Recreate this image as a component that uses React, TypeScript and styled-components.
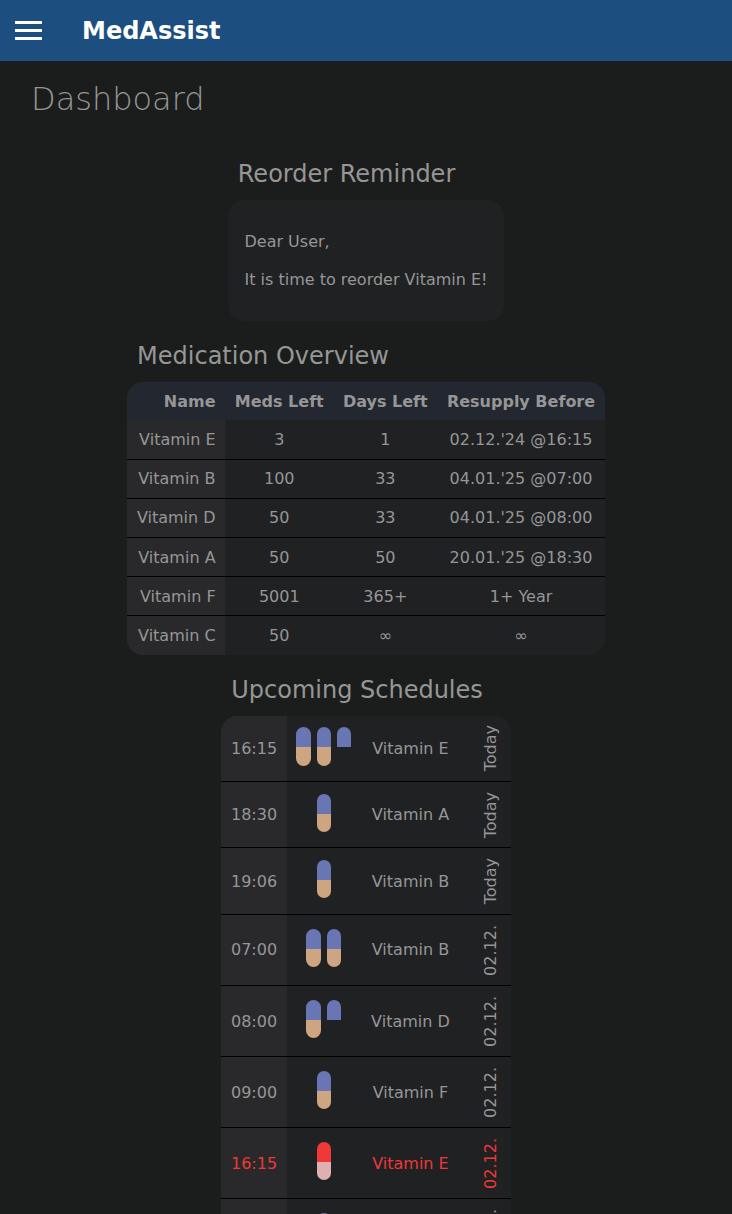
import React from "react";
import styled, { createGlobalStyle } from "styled-components";

const GlobalStyle = createGlobalStyle`
  * { box-sizing: border-box; }
  html, body { height: 100%; }
  body {
    margin: 0;
    overflow: hidden;
    background: #1b1d1c;
    color: #969696;
    font-family: "DejaVu Sans", sans-serif;
    font-size: 16px;
  }
`;

const TopBar = styled.header`
  display: flex;
  align-items: center;
  height: 61px;
  padding: 0 15px;
  gap: 40px;
  background: #1c4e80;
  color: #fff;
`;

const MenuButton = styled.button`
  display: flex;
  flex-direction: column;
  gap: 5px;
  width: 27px;
  padding: 0;
  border: 0;
  background: none;
`;

const MenuLine = styled.span`
  height: 3px;
  background: #fff;
`;

const Brand = styled.div`
  font-size: 24px;
  font-weight: 700;
  line-height: 28px;
`;

const PageTitle = styled.h1`
  margin: 19px 0 0 31px;
  font-size: 32px;
  font-weight: 200;
  line-height: 38px;
`;

const Content = styled.main`
  display: flex;
  flex-direction: column;
  align-items: center;
  gap: 21px;
  padding-top: 42px;
`;

const SectionTitle = styled.h2`
  margin: 0 0 12px 9.8px;
  font-size: 24px;
  font-weight: 400;
  line-height: 28px;
`;

const Card = styled.div`
  height: 121.2px;
  padding: 32px 16.5px;
  border-radius: 16px;
  background: #202123;
`;

const Paragraph = styled.p`
  margin: 0 0 19px;
  line-height: 19px;
`;

const TableFrame = styled.div`
  overflow: hidden;
  border-radius: 16px;
  background: #202123;
`;

const Table = styled.table`
  border-collapse: collapse;
  text-align: center;
`;

const HeadCell = styled.th<{ $right?: boolean }>`
  padding: 9.6px;
  background: #23272f;
  text-align: ${(p) => (p.$right ? "right" : "center")};
`;

const Row = styled.tr<{ $alert?: boolean }>`
  color: ${(p) => (p.$alert ? "#ee3838" : "inherit")};
  & + & { border-top: 1px solid #000; }
`;

const Cell = styled.td`
  padding: 9.6px;
`;

const LeadCell = styled(Cell)`
  background: #29292b;
  text-align: right;
`;

const DateCell = styled(Cell)`
  padding-left: 21.8px;
  padding-right: 10.4px;
`;

const VerticalText = styled.div`
  writing-mode: sideways-lr;
`;

const PillCell = styled.td`
  width: 74.8px;
  padding: 0 0.6px 3.8px 0;
`;

const Pills = styled.div`
  display: flex;
  justify-content: center;
  gap: 6px;
`;

const Pill = styled.div`
  width: 14.4px;
  height: 38.4px;
`;

const PillTop = styled.div<{ $alert?: boolean }>`
  height: 20px;
  border-radius: 8px 8px 0 0;
  background: ${(p) => (p.$alert ? "#f03838" : "#6876b4")};
`;

const PillBottom = styled.div<{ $alert?: boolean }>`
  height: 18.4px;
  border-radius: 0 0 8px 8px;
  background: ${(p) => (p.$alert ? "#e0b0b0" : "#cda580")};
`;

const medications = [
  ["Vitamin E", "3", "1", "02.12.'24 @16:15"],
  ["Vitamin B", "100", "33", "04.01.'25 @07:00"],
  ["Vitamin D", "50", "33", "04.01.'25 @08:00"],
  ["Vitamin A", "50", "50", "20.01.'25 @18:30"],
  ["Vitamin F", "5001", "365+", "1+ Year"],
  ["Vitamin C", "50", "∞", "∞"],
];

interface Dose {
  time: string;
  count: number;
  name: string;
  day: string;
  alert?: boolean;
}

const doses: Dose[] = [
  { time: "16:15", count: 2.5, name: "Vitamin E", day: "Today" },
  { time: "18:30", count: 1, name: "Vitamin A", day: "Today" },
  { time: "19:06", count: 1, name: "Vitamin B", day: "Today" },
  { time: "07:00", count: 2, name: "Vitamin B", day: "02.12." },
  { time: "08:00", count: 1.5, name: "Vitamin D", day: "02.12." },
  { time: "09:00", count: 1, name: "Vitamin F", day: "02.12." },
  { time: "16:15", count: 1, name: "Vitamin E", day: "02.12.", alert: true },
  { time: "18:30", count: 1, name: "Vitamin A", day: "02.12." },
];

function PillRow({ count, alert }: { count: number; alert?: boolean }) {
  return (
    <Pills>
      {Array.from({ length: Math.ceil(count) }, (_, i) => (
        <Pill key={i}>
          <PillTop $alert={alert} />
          {i + 1 <= count && <PillBottom $alert={alert} />}
        </Pill>
      ))}
    </Pills>
  );
}

export default function App() {
  return (
    <>
      <GlobalStyle />
      <TopBar>
        <MenuButton aria-label="Menu">
          <MenuLine />
          <MenuLine />
          <MenuLine />
        </MenuButton>
        <Brand>MedAssist</Brand>
      </TopBar>
      <PageTitle>Dashboard</PageTitle>
      <Content>
        <section>
          <SectionTitle>Reorder Reminder</SectionTitle>
          <Card>
            <Paragraph>Dear User,</Paragraph>
            <Paragraph>It is time to reorder Vitamin E!</Paragraph>
          </Card>
        </section>
        <section>
          <SectionTitle>Medication Overview</SectionTitle>
          <TableFrame>
            <Table>
              <thead>
                <tr>
                  <HeadCell $right>Name</HeadCell>
                  <HeadCell>Meds Left</HeadCell>
                  <HeadCell>Days Left</HeadCell>
                  <HeadCell>Resupply Before</HeadCell>
                </tr>
              </thead>
              <tbody>
                {medications.map(([name, meds, days, resupply]) => (
                  <Row key={name}>
                    <LeadCell>{name}</LeadCell>
                    <Cell>{meds}</Cell>
                    <Cell>{days}</Cell>
                    <Cell>{resupply}</Cell>
                  </Row>
                ))}
              </tbody>
            </Table>
          </TableFrame>
        </section>
        <section>
          <SectionTitle>Upcoming Schedules</SectionTitle>
          <TableFrame>
            <Table>
              <tbody>
                {doses.map((dose, i) => (
                  <Row key={i} $alert={dose.alert}>
                    <LeadCell>{dose.time}</LeadCell>
                    <PillCell>
                      <PillRow count={dose.count} alert={dose.alert} />
                    </PillCell>
                    <Cell>{dose.name}</Cell>
                    <DateCell>
                      <VerticalText>{dose.day}</VerticalText>
                    </DateCell>
                  </Row>
                ))}
              </tbody>
            </Table>
          </TableFrame>
        </section>
      </Content>
    </>
  );
}
